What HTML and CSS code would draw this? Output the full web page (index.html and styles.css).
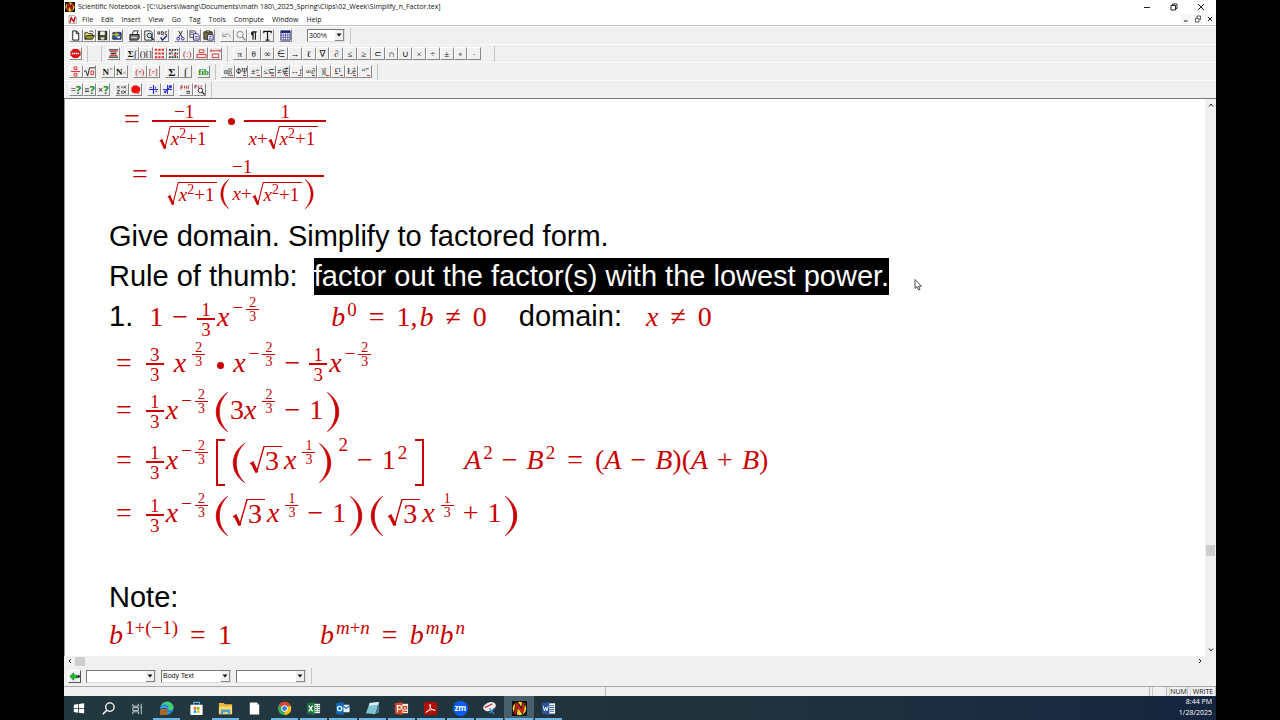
FILE: index.html
```html
<!DOCTYPE html>
<html lang="en">
<head>
<meta charset="utf-8">
<title>Scientific Notebook</title>
<link rel="stylesheet" href="styles.css">
</head>
<body>
<svg class="defs" aria-hidden="true">
  <symbol id="logo" viewBox="0 0 12 12"><rect width="12" height="12" fill="#111"/><circle cx="6" cy="6" r="5.4" fill="#f7d51d"/><path d="M2.5 11 4 2l4 6L9.500 1" fill="none" stroke="#111" stroke-width="2.600"/><path d="M2.500 10.500 4 2.500l4 6L9.500 1.500" fill="none" stroke="#e01818" stroke-width="1.500"/></symbol>
  <symbol id="root" viewBox="0 0 16 28" preserveAspectRatio="none"><path d="M1 18l3-2 4 9 7-24.500h1" fill="none" stroke="#c80000" stroke-width="1.400"/><path d="M3 16.500l5 10" fill="none" stroke="#c80000" stroke-width="3"/></symbol>
  <symbol id="lp" viewBox="0 0 13 40" preserveAspectRatio="none"><path d="M12.500.5C-2.500 11-2.500 29 12.500 39.500 1.500 29 1.500 11 12.500.5z" fill="#c80000" stroke="#c80000" stroke-width=".8"/></symbol>
  <symbol id="rp" viewBox="0 0 13 40" preserveAspectRatio="none"><path d="M.5.5C15.500 11 15.500 29 .5 39.500 11.500 29 11.500 11 .5.5z" fill="#c80000" stroke="#c80000" stroke-width=".8"/></symbol>
  <symbol id="arr" viewBox="0 0 6 4"><path d="M.5.5h5L3 3.500z" fill="#111"/></symbol>
</svg>
<div class="app">
  <header class="title">
    <svg class="logo"><use href="#logo"/></svg>
    <span>Scientific Notebook - [C:\Users\lwang\Documents\math 180\_2025_Spring\Clips\02_Week\Simplify_n_Factor.tex]</span>
    <div class="wins">
      <button aria-label="Minimize"><svg viewBox="0 0 8 8"><path d="M1 4.500h6" class="k"/></svg></button>
      <button aria-label="Restore"><svg viewBox="0 0 8 8"><path d="M1 2.500h4.500V7H1zM2.500 2.500V1H7v4.500H5.500" class="k"/></svg></button>
      <button aria-label="Close"><svg viewBox="0 0 8 8"><path d="M1 1l6 6M7 1L1 7" class="k"/></svg></button>
    </div>
  </header>
  <nav class="menu">
    <svg class="doclogo" viewBox="0 0 10 10"><path d="M1 .5h6l2.500 2V9.500H1z" fill="#fff" stroke="#777" stroke-width=".6"/><path d="M2 8.500 3.500 3l3 4.500L8 2" fill="none" stroke="#c81414" stroke-width="1.600"/></svg>
    <button>File</button><button>Edit</button><button>Insert</button><button>View</button><button>Go</button><button>Tag</button><button>Tools</button><button>Compute</button><button>Window</button><button>Help</button>
    <div class="mdi">
      <button aria-label="Minimize document"><svg viewBox="0 0 8 8"><path d="M2 6h3.500" class="k"/></svg></button>
      <button aria-label="Restore document"><svg viewBox="0 0 8 8"><path d="M1.500 3.500h3.500V7H1.500zM3 3V1h3.500v3.500H5.500" class="k thin"/></svg></button>
      <button aria-label="Close document"><svg viewBox="0 0 8 8"><path d="M2 2l4 4M6 2L2 6" class="k"/></svg></button>
    </div>
  </nav>

  <div class="bars">
    <div class="bar">
      <div class="g n4">
        <button aria-label="New"><svg viewBox="0 0 12 12"><path d="M3 1h4l2.500 2.500V11H3zM7 1v3h2.500" fill="#fff" stroke="#111"/></svg></button>
        <button aria-label="Open"><svg viewBox="0 0 12 12"><path d="M1 10V3h3l1 1h4v2" fill="#ffef70" stroke="#222"/><path d="M1 10l2-4h8.500L9 10z" fill="#9b9b20" stroke="#222"/><path d="M6 2c2-2 3-1 4 .5" fill="none" stroke="#222"/></svg></button>
        <button aria-label="Save"><svg viewBox="0 0 12 12"><path d="M1.500 1.500h9v9h-9z" fill="#4b4b2a" stroke="#111"/><path d="M3.500 1.500h5v4h-5z" fill="#eee"/><path d="M4 8h4v2.500H4z" fill="#ddd"/></svg></button>
        <button aria-label="Export"><svg viewBox="0 0 12 12"><path d="M2 3h5l1-1 1 1h2v7H2z" fill="#2a56b8" stroke="#122"/><path d="M1 5h5M5 3l3 2-3 2" stroke="#c8b818" stroke-width="1.500" fill="none"/><path d="M7 7h3v2H7z" fill="#fff"/></svg></button>
      </div>
      <div class="g n3">
        <button aria-label="Print"><svg viewBox="0 0 12 12"><path d="M3.500 5 5 1h5L8.500 5" fill="#fff" stroke="#222"/><path d="M1 5h10v4l-1.500 2H1z" fill="#777" stroke="#111"/><path d="M2.500 8h6" stroke="#eee"/></svg></button>
        <button aria-label="Preview"><svg viewBox="0 0 12 12"><path d="M2 1h6l2 2v8H2z" fill="#fff" stroke="#222"/><circle cx="7" cy="6" r="2.500" fill="#bcebee" stroke="#222"/><path d="M9 8l2.500 3" stroke="#222" stroke-width="1.500"/></svg></button>
        <button aria-label="Spelling"><svg viewBox="0 0 12 12"><path d="M1 5V2h2v3M1 4h2M5 1v4h2V2H5M11 2H9v3h2" fill="none" stroke="#222" stroke-width=".8"/><path d="M4 8l2 3 5-5" fill="none" stroke="#22227d" stroke-width="1.500"/></svg></button>
      </div>
      <div class="g n3">
        <button aria-label="Cut"><svg viewBox="0 0 12 12"><path d="M4 1l4 7M8 1L4 8" stroke="#222" fill="none"/><circle cx="3.500" cy="9.500" r="1.500" fill="none" stroke="#2a2a9a"/><circle cx="8.500" cy="9.500" r="1.500" fill="none" stroke="#2a2a9a"/></svg></button>
        <button aria-label="Copy"><svg viewBox="0 0 12 12"><path d="M1 1h5l1 1v6H1z" fill="#fff" stroke="#333"/><path d="M5 4h4l2 2v5H5z" fill="#fff" stroke="#22227d"/><path d="M2 3h3M2 5h2M6.500 7h3M6.500 9h3" stroke="#22227d" stroke-width=".8"/></svg></button>
        <button aria-label="Paste"><svg viewBox="0 0 12 12"><path d="M1 2h9v8H1z" fill="#777732" stroke="#222"/><path d="M3.500 1h4v2h-4z" fill="#eee266" stroke="#222"/><path d="M5 5h6v6H5z" fill="#fff" stroke="#22227d"/><path d="M6.500 7h3M6.500 9h3" stroke="#22227d" stroke-width=".8"/></svg></button>
      </div>
      <div class="g n4">
        <button aria-label="Undo"><svg viewBox="0 0 12 12"><path d="M2 3v4h4M2 7c3-4 8-3 8 1" fill="none" stroke="#999"/></svg></button>
        <button aria-label="Find"><svg viewBox="0 0 12 12"><circle cx="5.500" cy="5" r="3.500" fill="none" stroke="#888"/><path d="M8 7.500l3 3.500" stroke="#888" stroke-width="1.500"/></svg></button>
        <button aria-label="Show marks"><svg viewBox="0 0 12 12"><path d="M9.500 2H5.500v8.500M8 2v8.500" fill="none" stroke="#111" stroke-width="1.200"/><path d="M5.500 1.500a2.200 2.200 0 000 4.500z" fill="#111"/></svg></button>
        <button aria-label="Text"><svg viewBox="0 0 12 12"><path d="M2 3.500V1.500h8v2M6 1.500V11M4 11h4" fill="none" stroke="#111" stroke-width="1.300"/></svg></button>
      </div>
      <div class="g n1"><button aria-label="Table"><svg viewBox="0 0 12 12"><path d="M1 1h10v10H1z" fill="#fff" stroke="#222270"/><path d="M1 2h10" stroke="#222270" stroke-width="2.500"/><path d="M1 5.500h10M1 8h10M3.500 2v9M6 2v9M8.500 2v9" stroke="#4646a0" stroke-width=".8"/></svg></button></div>
      <label class="combo zoom"><select aria-label="Zoom"><option>300%</option></select><span><svg><use href="#arr"/></svg></span></label>
      <i class="sep"></i>
    </div>
    <div class="bar">
      <div class="g n1"><button aria-label="Stop"><svg viewBox="0 0 12 12"><path d="M3.500 1h5L11.500 4v4l-3 3h-5l-3-3V4z" fill="#d81414"/><path d="M2 6h8" stroke="#fff" stroke-width="1.800" stroke-dasharray="1.500 .6"/></svg></button></div>
      <i class="sep"></i><i class="sep far"></i>
      <div class="g n1"><button aria-label="Fragment"><svg viewBox="0 0 12 12"><path d="M1 2h10M1 10h10M3 6h6" stroke="#333" stroke-width="1.500"/><path d="M2 4h8M2 8h8" stroke="#e04040" stroke-width="1.500"/></svg></button></div>
      <div class="g n7 serif">
        <button><b>Σ∫</b></button><button>()[]</button>
        <button aria-label="Matrix"><svg viewBox="0 0 12 12"><path d="M1 2h10M1 6h10M1 10h10" stroke="#e02828" stroke-width="2.200" stroke-dasharray="2.500 1.200"/></svg></button>
        <button aria-label="Stack"><svg viewBox="0 0 12 12"><path d="M1 2h10M1 6h4M7 6h4M1 10h10" stroke="#333" stroke-width="2" stroke-dasharray="2 1"/><path d="M3 4h2M6 8h3" stroke="#e02828"/></svg></button>
        <button class="r">(:)</button>
        <button aria-label="Label above"><svg viewBox="0 0 12 12"><path d="M3.500 2h5v3h-5zM1 7h10v3.500H1z" fill="none" stroke="#e02828"/></svg></button>
        <button aria-label="Decoration"><svg viewBox="0 0 12 12"><path d="M1 3h10M1 1.500v3M11 1.500v3M2.500 6.500h7v4h-7z" fill="none" stroke="#e02828"/></svg></button>
      </div>
      <i class="sep"></i>
      <div class="g n18 sym">
        <button>π</button><button>θ</button><button>∞</button><button>∈</button><button>→</button><button>ℓ</button><button>∇</button><button>∂</button><button>≤</button><button>≥</button><button>⊂</button><button>∩</button><button>∪</button><button>×</button><button>÷</button><button>±</button><button>∘</button><button>·</button>
      </div>
      <i class="sep far"></i>
    </div>
    <div class="bar">
      <div class="g n2">
        <button aria-label="Fraction"><svg viewBox="0 0 12 12"><path d="M4.500 1h3v3h-3zM1 6h10M4.500 8h3v3h-3z" fill="none" stroke="#e02828"/></svg></button>
        <button aria-label="Radical"><svg viewBox="0 0 12 12"><path d="M0 6l2-1 2 6 2-9h6" fill="none" stroke="#222"/><path d="M7.500 5.500h3v4h-3z" fill="none" stroke="#e02828"/></svg></button>
      </div>
      <div class="g n2 serif"><button><b>N</b><sup>×</sup></button><button><b>N</b><sub>×</sub></button></div>
      <div class="g n2 serif"><button class="r">(▫)</button><button class="r">[▫]</button></div>
      <div class="g n2 serif big"><button>Σ</button><button>∫</button></div>
      <div class="g n1"><button class="green">fib</button></div>
      <i class="sep"></i>
      <div class="g n11 serif drop">
        <button>αβ</button><button>ΦΨ</button><button>±÷</button><button>≤⊆</button><button>≠∉</button><button>↔↕</button><button>∞∂</button><button>)[</button><button>£¹</button><button>Łě</button><button>“”</button>
      </div>
      <i class="sep"></i>
    </div>
    <div class="bar">
      <div class="g n3 eval">
        <button>=<b>?</b></button><button>≡<b>?</b></button><button>×<b>?</b></button>
      </div>
      <div class="g n2">
        <button aria-label="Expand"><svg viewBox="0 0 12 12"><path d="M1 2l3 3M4 2L1 5M5.500 3.500h2M8 2l3 3M11 2L8 5M1 7h3L1 10.500h3M5.500 8h2M5.500 10h2M8 7l3 3.500M11 7l-3 3.500" stroke="#222" stroke-width=".9" fill="none"/></svg></button>
        <button aria-label="Stop computing"><svg viewBox="0 0 12 12"><path d="M4 1.500h4L11 4v4l-2 1.500 2 1.500-4-1H4L1.500 8V4z" fill="#f01010"/></svg></button>
      </div>
      <div class="g n2">
        <button aria-label="Plot 2D"><svg viewBox="0 0 12 12"><path d="M6 1v10M1 6h10" stroke="#2424d8" stroke-width="1.200"/><path d="M2 4h2M8 8h2M8 3v2" stroke="#2424d8"/></svg></button>
        <button aria-label="Plot 3D"><svg viewBox="0 0 12 12"><path d="M6 1v10M1 6h10M3 9l6-6" stroke="#2424d8"/><circle cx="9" cy="3" r="2" fill="#4040d8"/><circle cx="3.500" cy="8.500" r="1.500" fill="#4040d8"/></svg></button>
      </div>
      <div class="g n2">
        <button aria-label="Define"><svg viewBox="0 0 12 12"><path d="M1 6V2h2M1 4h2M5 2v3M7 2v3M9 1.500v4" stroke="#b03030" fill="none"/><path d="M7 8h4M7 10h4" stroke="#222"/></svg></button>
        <button aria-label="Show definitions"><svg viewBox="0 0 12 12"><path d="M1 5V1.500h2M1 3h2M5 1.500v3M8 1.500v2" stroke="#b03030" fill="none"/><circle cx="7" cy="7" r="2.500" fill="#fff" stroke="#222"/><path d="M9 9l2.500 2.500" stroke="#222" stroke-width="1.400"/></svg></button>
      </div>
      <i class="sep"></i>
    </div>
  </div>

  <div class="work">
    <main class="doc">
      <div class="m first"><span class="in1"></span><span class="rel">=</span><span class="bf"><span>−1</span><span class="den"><span class="rt"><svg><use href="#root"/></svg><span><i>x</i><sup>2</sup>+1</span></span></span></span><span class="dot"></span><span class="bf"><span>1</span><span class="den tight"><i>x</i>+<span class="rt"><svg><use href="#root"/></svg><span><i>x</i><sup>2</sup>+1</span></span></span></span></div>
      <div class="m second"><span class="in2"></span><span class="rel">=</span><span class="bf"><span>−1</span><span class="den"><span class="rt"><svg><use href="#root"/></svg><span><i>x</i><sup>2</sup>+1</span></span><svg class="sp"><use href="#lp"/></svg><i>x</i>+<span class="rt"><svg><use href="#root"/></svg><span><i>x</i><sup>2</sup>+1</span></span><svg class="sp"><use href="#rp"/></svg></span></span></div>
      <p class="t">Give domain. Simplify to factored form.</p>
      <p class="t">Rule of thumb:&nbsp; <mark>factor out the factor(s) with the lowest power.</mark></p>
      <div class="m l40"><span class="txt">1.</span><span class="s16"></span>1<span class="op">−</span><span class="fr"><span>1</span><span>3</span></span><i>x</i><span class="up">−<span class="sf"><span>2</span><span>3</span></span></span><span class="s72"></span><i>b</i><sup>0</sup><span class="rel wide">=</span>1,<i class="after">b</i><span class="rel">≠</span>0<span class="s32"></span><span class="txt">domain:</span><span class="s24"></span><i>x</i><span class="rel">≠</span>0</div>
      <div class="m l49"><span class="rel start">=</span><span class="fr"><span>3</span><span>3</span></span><span class="s8"></span><i>x</i><span class="up"><span class="sf"><span>2</span><span>3</span></span></span><span class="dot"></span><i>x</i><span class="up">−<span class="sf"><span>2</span><span>3</span></span></span><span class="op">−</span><span class="fr"><span>1</span><span>3</span></span><i>x</i><span class="up">−<span class="sf"><span>2</span><span>3</span></span></span></div>
      <div class="m l45"><span class="rel start">=</span><span class="fr"><span>1</span><span>3</span></span><i>x</i><span class="up">−<span class="sf"><span>2</span><span>3</span></span></span><svg class="p lp"><use href="#lp"/></svg>3<i>x</i><span class="up"><span class="sf"><span>2</span><span>3</span></span></span><span class="op">−</span>1<svg class="p rp"><use href="#rp"/></svg></div>
      <div class="m l55"><span class="rel start">=</span><span class="fr"><span>1</span><span>3</span></span><i>x</i><span class="up">−<span class="sf"><span>2</span><span>3</span></span></span><span class="br lb"></span><svg class="p lp"><use href="#lp"/></svg><span class="rt main"><svg><use href="#root"/></svg><span>3</span></span><i>x</i><span class="up"><span class="sf"><span>1</span><span>3</span></span></span><svg class="p rp"><use href="#rp"/></svg><sup class="high">2</sup><span class="op">−</span>1<sup>2</sup><span class="br rb"></span><span class="s40"></span><i>A</i><sup>2</sup><span class="op">−</span><i>B</i><sup>2</sup><span class="rel wide">=</span>(<i>A</i><span class="op">−</span><i>B</i>)(<i>A</i><span class="op">+</span><i>B</i>)</div>
      <div class="m l51"><span class="rel start">=</span><span class="fr"><span>1</span><span>3</span></span><i>x</i><span class="up">−<span class="sf"><span>2</span><span>3</span></span></span><svg class="p lp"><use href="#lp"/></svg><span class="rt main"><svg><use href="#root"/></svg><span>3</span></span><i>x</i><span class="up"><span class="sf"><span>1</span><span>3</span></span></span><span class="op">−</span>1<svg class="p rp"><use href="#rp"/></svg><svg class="p lp"><use href="#lp"/></svg><span class="rt main"><svg><use href="#root"/></svg><span>3</span></span><i>x</i><span class="up"><span class="sf"><span>1</span><span>3</span></span></span><span class="op">+</span>1<svg class="p rp"><use href="#rp"/></svg></div>
      <p class="t note">Note:</p>
      <div class="m l38"><i>b</i><sup>1+(−1)</sup><span class="rel">=</span>1<span class="s88"></span><i>b</i><sup><i>m</i>+<i>n</i></sup><span class="rel">=</span><i>b</i><sup><i>m</i></sup><i>b</i><sup><i>n</i></sup></div>
      <svg class="cursor" viewBox="0 0 8 12"><path d="M1 .5v9l2-1.800L4.500 11l1.500-.7-1.400-3H7.500z" fill="#fff" stroke="#222" stroke-width=".8"/></svg>
    </main>
    <div class="vs"><svg viewBox="0 0 8 8"><path d="M2 5.500L4 3l2 2.500" class="k"/></svg><span></span><svg viewBox="0 0 8 8"><path d="M2 2.500L4 5l2-2.500" class="k"/></svg></div>
  </div>
  <div class="hs"><svg viewBox="0 0 8 8"><path d="M5 2L3 4l2 2" class="k"/></svg><span></span><svg class="end" viewBox="0 0 8 8"><path d="M3 2l2 2-2 2" class="k"/></svg></div>

  <div class="tags">
    <button class="back" aria-label="Remove tag"><svg viewBox="0 0 12 12"><path d="M1 6l4-4v2.500h4v3H5V10z" fill="#18c818" stroke="#063" stroke-width=".7"/><circle cx="10.500" cy="6" r="1.300"/></svg></button>
    <label class="combo"><select aria-label="Item tag"><option></option></select><span><svg><use href="#arr"/></svg></span></label>
    <label class="combo"><select aria-label="Section tag"><option>Body Text</option></select><span><svg><use href="#arr"/></svg></span></label>
    <label class="combo"><select aria-label="Text tag"><option></option></select><span><svg><use href="#arr"/></svg></span></label>
    <i class="sep"></i>
  </div>
  <footer class="status"><span></span><span></span><span class="b"></span><span class="b c">NUM</span><span class="b d">WRITE</span></footer>

  <div class="task">
    <div class="icons">
      <button aria-label="Start"><svg viewBox="0 0 16 16"><path d="M3 4l4.500-.7v4.200H3zM8.300 3.200L14 2.500v5H8.300zM3 8.300h4.500v4.200L3 11.800zM8.300 8.300H14v5l-5.700-.8z" fill="#fff"/></svg></button>
      <button aria-label="Search"><svg viewBox="0 0 16 16"><circle cx="9.500" cy="6.500" r="4.500" fill="none" stroke="#fff" stroke-width="1.400"/><path d="M6.300 9.800L2 14" stroke="#fff" stroke-width="1.500"/></svg></button>
      <button aria-label="Task view"><svg viewBox="0 0 16 16"><path d="M3 3v2.500h6V3M3 7h6v3H3zM3 14v-2.500h6V14M12 3v11M11 6.500h2" fill="none" stroke="#ccd5d8"/></svg></button>
      <button class="on" aria-label="Edge"><svg viewBox="0 0 16 16"><circle cx="8.500" cy="7.500" r="7" fill="#1c7fd6"/><path d="M2 6C3-1 15-1 15.500 7c0 4-5 4-6 1.500C12 4 5 2 2 6z" fill="#49cf73"/><path d="M1.500 7c3-4 8-1 7 1-3 2 0 5 4 4-4 4-10 2-11-5z" fill="#36a8ec"/><path d="M1 9h8v6H1z" fill="#a96528"/><path d="M3 9V8h4v1" stroke="#5d3515" fill="none"/></svg></button>
      <button aria-label="Store"><svg viewBox="0 0 16 16"><path d="M5 4V1.500h6V4" fill="none" stroke="#58b8ee" stroke-width="1.200"/><path d="M1.500 4h13v10a1 1 0 01-1 1h-11a1 1 0 01-1-1z" fill="#fff"/><path d="M5 6.500h2.700v2.700H5z" fill="#f25022"/><path d="M8.500 6.500h2.700v2.700H8.500z" fill="#7fba00"/><path d="M5 10h2.700v2.700H5z" fill="#00a4ef"/><path d="M8.500 10h2.700v2.700H8.500z" fill="#ffb900"/></svg></button>
      <button class="on" aria-label="Explorer"><svg viewBox="0 0 16 16"><path d="M1 2h5l1.500 1.500H15V14H1z" fill="#f0b93c"/><path d="M1 6h14v8H1z" fill="#ffda72"/><path d="M3 14V9h10v5h-2.500v-2h-5v2z" fill="#4f9fd2"/></svg></button>
      <button aria-label="Document"><svg viewBox="0 0 16 16"><path d="M3 1.500h7.500L13 4v10.500H3z" fill="#fff"/><path d="M10.500 1.500V4H13" fill="#bbb"/></svg></button>
      <button class="on" aria-label="Chrome"><svg viewBox="0 0 16 16"><circle cx="8" cy="8" r="7" fill="#35a753"/><path d="M8 8L2 4.300A7 7 0 0114.500 5H8z" fill="#e8402f"/><path d="M8 8l6.500-3A7 7 0 018 15z" fill="#fbc116"/><circle cx="8" cy="8" r="3.500" fill="#fff"/><circle cx="8" cy="8" r="2.600" fill="#3d7fe8"/></svg></button>
      <button class="on" aria-label="Excel"><svg viewBox="0 0 16 16"><path d="M8 3h7v10H8z" fill="#e9f3ec"/><path d="M9.500 5h2M9.500 7h2M9.500 9h2M9.500 11h2M12.500 5h2M12.500 7h2M12.500 9h2M12.500 11h2" stroke="#207245"/><path d="M1 2.500L9 1v14l-8-1.500z" fill="#207245"/><path d="M3 5l4 6M7 5l-4 6" stroke="#fff" stroke-width="1.300"/></svg></button>
      <button class="on" aria-label="Outlook"><svg viewBox="0 0 16 16"><path d="M8 4h7.500v8H8z" fill="#e8f2fb"/><path d="M8.500 5l3.500 3 3.500-3" fill="none" stroke="#0b67bd" stroke-width="1.200"/><path d="M1 2.500L9 1v14l-8-1.500z" fill="#0b67bd"/><circle cx="5" cy="8" r="2.300" fill="none" stroke="#fff" stroke-width="1.400"/></svg></button>
      <button class="on" aria-label="Notepad"><svg viewBox="0 0 16 16"><path d="M5 2l10-1-4 13-10-1z" fill="#7ec3cf"/><path d="M5 2l10-1-1 3-10 1z" fill="#d9eef0"/><path d="M11 14l4-13v11z" fill="#44808f"/></svg></button>
      <button class="on" aria-label="PowerPoint"><svg viewBox="0 0 16 16"><path d="M8 3h7v10H8z" fill="#fbe9e4"/><path d="M10 6h3.500v2.500H10zM10 11h4" fill="none" stroke="#d24726" stroke-width="1.200"/><path d="M1 2.500L9 1v14l-8-1.500z" fill="#d24726"/><path d="M3.700 12V5H6a1.800 1.800 0 010 4H3.700" fill="none" stroke="#fff" stroke-width="1.300"/></svg></button>
      <button class="on" aria-label="Acrobat"><svg viewBox="0 0 16 16"><rect x="1" y="1" width="14" height="14" rx="2" fill="#b30b00"/><path d="M3 12c4-2 6-6 4.500-8.500C6 5 9 10 13 10c-2-2-7 0-10 2z" fill="none" stroke="#fff"/></svg></button>
      <button class="on" aria-label="Zoom"><span class="zm">zm</span></button>
      <button class="on" aria-label="Snip"><svg viewBox="0 0 16 16"><ellipse cx="8" cy="6" rx="7" ry="4.500" fill="#eee" transform="rotate(-20 8 6)"/><path d="M3 7l8-4" stroke="#c83b4c" stroke-width="1.500"/><path d="M8 8l5 6M13 8l-5 5" stroke="#3c91c4" stroke-width="1.500"/></svg></button>
      <button class="on cur" aria-label="Scientific Notebook"><svg><use href="#logo"/></svg></button>
      <button class="on" aria-label="Word"><svg viewBox="0 0 16 16"><path d="M8 2.500h7v11H8z" fill="#fff"/><path d="M9.500 5h4.500M9.500 7h4.500M9.500 9h4.500M9.500 11h4.500" stroke="#2b579a"/><path d="M1 2.500L9 1v14l-8-1.500z" fill="#2b579a"/><path d="M2.500 5.500l1.200 5L5 6.500l1.300 4 1.200-5" fill="none" stroke="#fff"/></svg></button>
    </div>
    <div class="clock"><span>8:44 PM</span><span>1/28/2025</span></div>
  </div>
</div>
</body>
</html>
```
FILE: styles.css
```css
* { box-sizing: border-box; }
body { margin: 0; background: #000; font-family: "Open Sans", "Noto Sans", sans-serif; font-size: 7px; color: #111; }
button { font: inherit; color: inherit; background: none; border: 0; padding: 0; margin: 0; }
svg { display: block; }
.defs { position: absolute; width: 0; height: 0; }
.k { fill: none; stroke: #222; stroke-width: 1; }
.thin { stroke-width: .7px; }
.app { margin: 0 5%; height: 100vh; display: flex; flex-direction: column; background: #f0f0f0; overflow: hidden; }
.app > * { flex: none; }

.title { height: 13px; background: #fff; display: flex; align-items: center; gap: 3px; padding: 0 2px 0 1px; white-space: nowrap; }
.logo { width: 10px; height: 10px; }
.wins { margin-left: auto; display: flex; }
.wins button { width: 27px; display: flex; justify-content: center; }
.wins svg { width: 8px; height: 8px; }
.menu { height: 12px; background: #fff; display: flex; align-items: center; gap: 8px; padding-left: 4px; }
.doclogo { width: 9px; height: 9px; margin-right: -3px; }
.mdi { margin-left: auto; display: flex; gap: 2px; padding-right: 1px; }
.mdi button { width: 10px; height: 10px; background: #f6f6f6; display: flex; align-items: center; justify-content: center; }
.mdi svg { width: 8px; height: 8px; }

.bars { border-top: 1px solid #c4c4c4; border-bottom: 1px solid #777; }
.bar { height: 18px; padding-left: 5px; display: flex; align-items: center; gap: 5px; border-top: 1px solid #fafafa; }
.g { display: flex; height: 13px; }
.n1 { width: 13px; } .n2 { width: 27px; } .n3 { width: 41px; } .n4 { width: 54px; }
.n7 { width: 97px; } .n11 { width: 151px; } .n18 { width: 248px; }
.g button { flex: 1; min-width: 0; display: flex; align-items: center; justify-content: center; border: 1px solid; border-color: #fff #888 #888 #fff; overflow: hidden; line-height: 10px; white-space: nowrap; }
.g svg { width: 11px; height: 11px; flex: none; }
.sep { width: 1px; height: 16px; background: #c4c4c4; flex: none; }
.far { margin-left: 8px; }
.serif { font-family: "Liberation Serif", serif; font-size: 9px; }
.serif sup, .serif sub { font-size: 7px; color: #d02020; line-height: 1; }
.serif sup { align-self: flex-start; } .serif sub { align-self: flex-end; }
.big { font-size: 11px; font-weight: bold; }
.sym { font-family: "Liberation Serif", "DejaVu Sans", serif; font-size: 9px; }
.g .r { color: #b02828; }
.g .green { color: #159015; font-family: "Liberation Serif", serif; font-size: 9px; font-weight: bold; }
.drop button { font-size: 8px; background: linear-gradient(#d03030, #d03030) right 1px bottom 1px / 3px 1px no-repeat; }
.eval button { font-size: 9px; }
.eval b { color: #108018; font-size: 11px; }

.combo { display: flex; width: 70px; height: 13px; background: #fff; border: 1px solid; border-color: #777 #ddd #ddd #777; }
.combo select { flex: 1; min-width: 0; appearance: none; border: 0; padding: 0 1px; background: #fff; font: 7px/10px "Liberation Sans", sans-serif; color: #111; }
.combo span { width: 9px; background: #f0f0f0; border-right: 1px solid #888; border-bottom: 1px solid #888; display: flex; align-items: center; justify-content: center; pointer-events: none; }
.combo svg { width: 6px; height: 4px; }
.zoom { width: 38px; margin-left: 10px; }

.app > .work { flex: 1; min-height: 0; display: flex; background: #fff; border-left: 1px solid #999; }
.doc { position: relative; flex: 1; min-width: 0; padding-left: 44px; overflow: hidden; color: #c80000; }
.vs { width: 11px; background: #f0f0f0; display: flex; flex-direction: column; align-items: center; padding: 2px 0; }
.vs svg, .hs svg { width: 8px; height: 8px; }
.vs span { width: 9px; height: 11px; margin: auto 0 90px; background: #cdcdcd; }
.hs { height: 10px; display: flex; align-items: center; padding: 0 12px 0 2px; }
.hs span { width: 10px; height: 9px; margin-left: 1px; background: #cdcdcd; }
.end { margin-left: auto; }

.t { margin: 0; font: 29px/40px "Liberation Sans", sans-serif; color: #000; white-space: nowrap; }
.note { margin-top: 40px; line-height: 38px; }
mark { background: #000; color: #fff; display: inline-block; line-height: 37px; }
.m { font-family: "Liberation Serif", serif; font-size: 28px; white-space: nowrap; }
.m i { font-style: italic; }
.m svg { display: inline-block; }
.txt { font-family: "Liberation Sans", sans-serif; font-size: 29px; color: #000; }
.l38 { line-height: 38px; } .l40 { line-height: 40px; } .l45 { line-height: 45px; } .l49 { line-height: 49px; } .l51 { line-height: 51px; } .l55 { line-height: 55px; }
.first { line-height: 39px; height: 55px; }
.second { line-height: 39px; height: 62px; }
.in1, .in2, .s8, .s16, .s24, .s32, .s40, .s72, .s88 { display: inline-block; }
.in1 { width: 4px; } .in2 { width: 12px; } .s8 { width: 8px; } .s16 { width: 16px; } .s24 { width: 24px; } .s32 { width: 32px; } .s40 { width: 40px; } .s72 { width: 72px; } .s88 { width: 88px; }
.op { margin: 0 9px; }
.rel { margin: 0 12px; }
.in1 + .rel, .in2 + .rel { margin-left: 11px; }
.start { margin: 0 14px 0 7px; }
.after { margin-left: 2px; }
.m sup { font-size: 19px; line-height: 0; vertical-align: 10px; margin-left: 2px; }
.m .high { vertical-align: 18px; margin-left: 6px; }
.up { font-size: 19px; line-height: 0; vertical-align: 12px; margin-left: 3px; }
.fr, .sf { display: inline-flex; flex-direction: column; vertical-align: middle; text-align: center; }
.fr { font-size: 19px; line-height: 16px; width: 18px; margin-right: 2px; }
.fr span:last-child { border-top: 2px solid; padding-top: 2px; }
.sf { font-size: 14px; line-height: 12px; width: 13px; margin-left: 3px; }
.sf span:last-child { border-top: 1px solid; padding-top: 1px; }
.dot { display: inline-block; width: 7px; height: 7px; border-radius: 50%; background: #c80000; margin: 0 9px 0 12px; vertical-align: 3px; }
.m .p { width: 13px; height: 40px; vertical-align: middle; }
.lp { margin-left: 7px; margin-right: 2px; }
.rp { margin-left: 4px; }
.br { display: inline-block; width: 9px; height: 47px; border: 2px solid; vertical-align: middle; }
.lb { border-right: 0; margin-left: 8px; }
.rb { border-left: 0; margin-left: 8px; }
.bf { display: inline-flex; flex-direction: column; align-items: stretch; text-align: center; vertical-align: 10px; font-size: 19px; line-height: 16px; }
.den { border-top: 2px solid; padding: 4px 7px 0; display: flex; align-items: center; justify-content: center; line-height: 24px; }
.tight { padding: 4px 8px 0 4px; }
.second .den { padding-top: 2px; }
.rt { display: inline-flex; vertical-align: baseline; }
.rt svg { width: 12px; height: 24px; flex: none; }
.rt > span { border-top: 1px solid; padding-right: 3px; line-height: 24px; }
.m .rt sup { font-size: 14px; vertical-align: 7px; margin-left: 0; }
.main { margin: 0 2px; vertical-align: -5px; }
.main svg { width: 16px; height: 28px; }
.main > span { line-height: 27px; }
.m .sp { width: 9px; height: 30px; margin: 0 3px; }
.cursor { position: absolute; left: 849px; top: 180px; width: 8px; height: 12px; }

.tags { height: 20px; padding-left: 4px; display: flex; align-items: center; gap: 5px; }
.back { width: 13px; height: 13px; border: 1px solid; border-color: #fff #555 #555 #fff; }
.back svg { width: 11px; height: 11px; }
.status { height: 10px; border-top: 1px solid #aaa; display: flex; gap: 2px; line-height: 9px; }
.status span { flex: 1; border-right: 1px solid #bbb; }
.status .b { flex: none; width: 15px; border-left: 1px solid #ccc; text-align: center; }
.status .c { width: 19px; } .status .d { width: 26px; }

.task { height: 24px; display: flex; justify-content: space-between; background: linear-gradient(90deg, #22383f, #20323d 60%, #16253f); color: #fff; }
.icons { display: flex; width: 499px; }
.icons button { flex: 1; display: flex; align-items: center; justify-content: center; border-bottom: 2px solid transparent; background-clip: padding-box; padding-top: 2px; }
.icons svg { width: 15px; height: 15px; }
.icons .on { border-image: linear-gradient(90deg, transparent 10%, #6fb4e2 10%, #6fb4e2 90%, transparent 90%) 2; border-top: 0; border-left: 0; border-right: 0; }
.icons .cur { background: #48606b; }
.zm { width: 15px; height: 15px; border-radius: 50%; background: #0b5cff; font-size: 8px; font-weight: bold; line-height: 13px; text-align: center; }
.clock { display: flex; flex-direction: column; align-items: flex-end; justify-content: center; line-height: 11px; padding: 0 4px 2px 0; }
```
